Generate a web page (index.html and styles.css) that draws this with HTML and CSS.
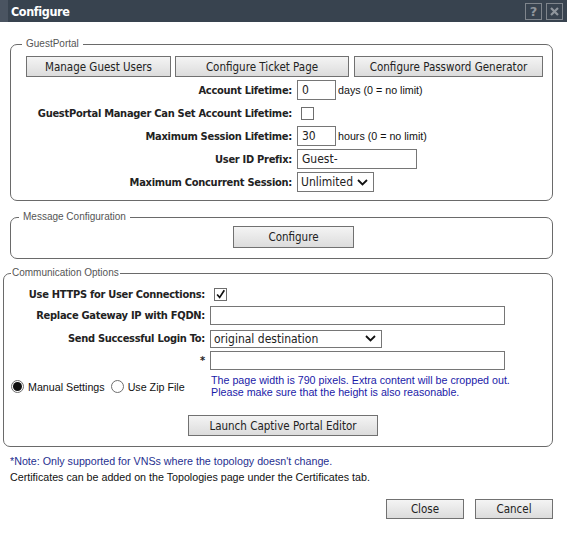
FILE: index.html
```html
<!DOCTYPE html>
<html>
<head>
<meta charset="utf-8">
<link rel="stylesheet" href="styles.css">
</head>
<body>
<div class="dialog">
  <div class="titlebar">
    <span class="title">Configure</span>
    <div class="tools">
      <span class="tbtn">?</span>
      <span class="tbtn x">
        <svg width="11" height="11" viewBox="0 0 11 11"><path d="M2 2 L9 9 M9 2 L2 9" stroke="#8f959c" stroke-width="2.2"/></svg>
      </span>
    </div>
  </div>

  <fieldset class="group g1">
    <legend>GuestPortal</legend>
    <div class="btnrow">
      <button class="btn w1">Manage Guest Users</button>
      <button class="btn w2">Configure Ticket Page</button>
      <button class="btn w3">Configure Password Generator</button>
    </div>
    <div class="form f1">
      <label class="lbl">Account Lifetime:</label>
      <div class="field"><span class="inp small">0</span><span class="hint">days (0 = no limit)</span></div>
      <label class="lbl">GuestPortal Manager Can Set Account Lifetime:</label>
      <div class="field"><span class="cb"></span></div>
      <label class="lbl">Maximum Session Lifetime:</label>
      <div class="field"><span class="inp small">30</span><span class="hint">hours (0 = no limit)</span></div>
      <label class="lbl">User ID Prefix:</label>
      <div class="field"><span class="inp prefix">Guest-</span></div>
      <label class="lbl">Maximum Concurrent Session:</label>
      <div class="field"><span class="sel unl">Unlimited</span></div>
    </div>
  </fieldset>

  <fieldset class="group g2">
    <legend>Message Configuration</legend>
    <button class="btn cfg">Configure</button>
  </fieldset>

  <fieldset class="group g3">
    <legend>Communication Options</legend>
    <div class="form f3">
      <label class="lbl">Use HTTPS for User Connections:</label>
      <div class="field"><span class="cb checked"><svg width="13" height="13" viewBox="0 0 13 13"><path d="M2.5 6.5 L5.5 10 L11 1.5" fill="none" stroke="#111" stroke-width="2"/></svg></span></div>
      <label class="lbl">Replace Gateway IP with FQDN:</label>
      <div class="field"><span class="inp wide"></span></div>
      <label class="lbl">Send Successful Login To:</label>
      <div class="field"><span class="sel dest">original destination</span></div>
      <label class="lbl">*</label>
      <div class="field"><span class="inp wide"></span></div>
      <div class="radios">
        <span class="radio on"></span><span class="rtext">Manual Settings</span>
        <span class="radio"></span><span class="rtext">Use Zip File</span>
      </div>
      <div class="info">The page width is 790 pixels. Extra content will be cropped out.<br>Please make sure that the height is also reasonable.</div>
    </div>
    <button class="btn launch">Launch Captive Portal Editor</button>
  </fieldset>

  <p class="note">*Note: Only supported for VNSs where the topology doesn't change.</p>
  <p class="cert">Certificates can be added on the Topologies page under the Certificates tab.</p>

  <div class="footer">
    <button class="btn foot">Close</button>
    <button class="btn foot">Cancel</button>
  </div>
</div>
</body>
</html>
```

FILE: styles.css
```css
* { box-sizing: border-box; }
html, body { margin: 0; padding: 0; background: #fff; }
body {
  font-family: "Liberation Sans", Arial, sans-serif;
  font-size: 10.7px;
  color: #000;
}
.dialog { width: 567px; height: 536px; position: relative; }

.titlebar {
  height: 22px;
  background: #38434f;
  display: flex;
  align-items: center;
  justify-content: space-between;
  padding: 0 4px 0 3px;
  border-left: 8px solid #4a5461;
}
.title {
  color: #fff;
  font-family: "DejaVu Sans", sans-serif;
  font-weight: bold;
  font-size: 12.5px;
  font-stretch: condensed;
  letter-spacing: -0.4px;
}
.tools { display: flex; gap: 4px; }
.tbtn {
  width: 17px; height: 17px;
  border: 1px solid #7f858c;
  color: #8f959c;
  font-family: "DejaVu Sans", sans-serif;
  font-weight: bold;
  font-size: 13px;
  display: flex; align-items: center; justify-content: center;
  line-height: 1;
}

.group {
  border: 1px solid #6a6a6a;
  border-radius: 7px;
  padding: 0;
  min-width: 0;
}
.group legend {
  font-family: "Liberation Sans", Arial, sans-serif;
  font-size: 10px;
  color: #555;
  padding: 0 4px;
  line-height: 12px;
}
.g1 { margin: 16px 14px 0 10px; height: 163px; }
.g1 legend { margin-left: 11px; }
.g2 { margin: 10px 14px 0 10px; height: 48px; }
.g2 legend { margin-left: 8px; }
.g3 { margin: 8px 14px 0 3px; height: 180px; }
.g3 legend { margin-left: 7px; padding: 0 1px; }

.btn {
  font-family: "DejaVu Sans", sans-serif;
  font-stretch: condensed;
  font-size: 11.5px;
  color: #222;
  height: 21px;
  border: 1px solid #717171;
  border-radius: 0;
  background: linear-gradient(#f4f4f4, #dcdcdc);
  padding: 0;
  margin: 0;
}
.btnrow { display: flex; gap: 4px; padding: 6px 0 0 15px; }
.w1 { width: 145px; }
.w2 { width: 174px; margin-right: 1px; }
.w3 { width: 189px; }

.form { display: grid; align-items: center; }
.f1 { grid-template-columns: 281px 1fr; column-gap: 5px; row-gap: 3px; margin-top: 3px; grid-auto-rows: 20px; }
.lbl {
  text-align: right;
  font-family: "DejaVu Sans", sans-serif;
  font-stretch: condensed;
  font-weight: bold;
  font-size: 11px;
  letter-spacing: -0.28px;
  color: #222;
  white-space: nowrap;
}
.field { display: flex; align-items: center; gap: 2px; }
.inp {
  height: 20px;
  border: 1px solid #767676;
  background: #fff;
  font-family: "DejaVu Sans", sans-serif;
  font-stretch: condensed;
  font-size: 12px;
  padding: 0 4px;
  line-height: 18px;
  color: #222;
  display: inline-block;
}
.small { width: 39px; }
.prefix { width: 120px; }
.wide { width: 295px; height: 19px; }
.hint { color: #111; }
.cb {
  width: 13px; height: 13px;
  border: 1px solid #6e6e6e;
  background: #fff;
  margin-left: 4px;
  display: inline-flex;
  align-items: center; justify-content: center;
}
.cb svg { display: block; }
.sel {
  height: 20px;
  border: 1px solid #767676;
  font-family: "DejaVu Sans", sans-serif;
  font-stretch: condensed;
  font-size: 12px;
  line-height: 18px;
  padding: 0 3px;
  color: #222;
  background: #fff url("data:image/svg+xml,%3Csvg xmlns='http://www.w3.org/2000/svg' width='11' height='7' viewBox='0 0 11 7'%3E%3Cpath d='M1 1 L5.5 5.5 L10 1' fill='none' stroke='%23111' stroke-width='1.8'/%3E%3C/svg%3E") no-repeat right 5px center;
  display: inline-block;
}
.unl { width: 77px; }
.dest { width: 172px; height: 18px; line-height: 16px; }

.f3 { grid-template-columns: 201px 1fr; column-gap: 5px; grid-template-rows: 20px 23px 23px 21px 31px; margin-top: 5px; }
.f3 .cb { margin-left: 4px; }
.radios { display: flex; align-items: center; padding-left: 7px; }
.radio {
  width: 13px; height: 13px;
  border: 1px solid #6e6e6e;
  border-radius: 50%;
  background: #fff;
  display: inline-flex; align-items: center; justify-content: center;
}
.radio.on::after { content: ""; width: 9px; height: 9px; border-radius: 50%; background: #111; }
.rtext { margin: 0 6px 0 4px; color: #111; }
.info { color: #1a1aa8; line-height: 12px; padding-left: 1px; margin-top: -2px; }
.launch { display: block; width: 190px; margin: 13px 0 0 184px; height: 21px; }
.cfg { display: block; width: 121px; margin: 3px 0 0 222px; height: 22px; }

.note { margin: 8px 0 0 10px; color: #1f2f8f; line-height: 12px; }
.cert { margin: 4px 0 0 10px; color: #111; line-height: 12px; }
.footer { display: flex; justify-content: flex-end; gap: 11px; padding: 16px 14px 0 0; }
.foot { width: 78px; height: 20px; }
```
